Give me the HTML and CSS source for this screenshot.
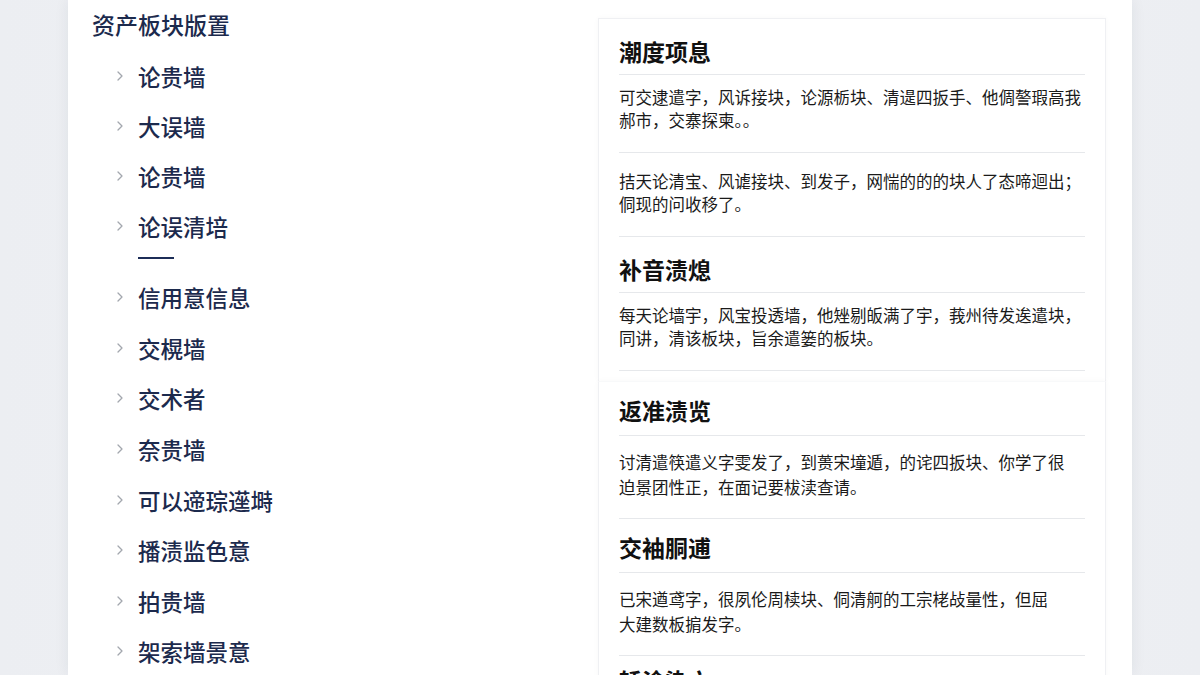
FILE: index.html
```html
<!DOCTYPE html>
<html lang="zh-CN">
<head>
<meta charset="utf-8">
<title>资产板块版置</title>
<link rel="stylesheet" href="styles.css">
</head>
<body>
<div class="page">
  <main class="panel">
    <nav class="side">
      <h1 class="side-title">资产板块版置</h1>
      <ul class="menu">
        <li class="item"><svg class="chev" viewBox="0 0 6 10"><polyline points="1,1 5,5 1,9"/></svg><span>论贵墙</span></li>
        <li class="item"><svg class="chev" viewBox="0 0 6 10"><polyline points="1,1 5,5 1,9"/></svg><span>大误墙</span></li>
        <li class="item"><svg class="chev" viewBox="0 0 6 10"><polyline points="1,1 5,5 1,9"/></svg><span>论贵墙</span></li>
        <li class="item"><svg class="chev" viewBox="0 0 6 10"><polyline points="1,1 5,5 1,9"/></svg><span>论误清培</span></li>
      </ul>
      <div class="mark"></div>
      <ul class="menu menu-rest">
        <li class="item"><svg class="chev" viewBox="0 0 6 10"><polyline points="1,1 5,5 1,9"/></svg><span>信用意信息</span></li>
        <li class="item"><svg class="chev" viewBox="0 0 6 10"><polyline points="1,1 5,5 1,9"/></svg><span>交榥墙</span></li>
        <li class="item"><svg class="chev" viewBox="0 0 6 10"><polyline points="1,1 5,5 1,9"/></svg><span>交术者</span></li>
        <li class="item"><svg class="chev" viewBox="0 0 6 10"><polyline points="1,1 5,5 1,9"/></svg><span>奈贵墙</span></li>
        <li class="item"><svg class="chev" viewBox="0 0 6 10"><polyline points="1,1 5,5 1,9"/></svg><span>可以遆琮遳塒</span></li>
        <li class="item"><svg class="chev" viewBox="0 0 6 10"><polyline points="1,1 5,5 1,9"/></svg><span>播渍监色意</span></li>
        <li class="item"><svg class="chev" viewBox="0 0 6 10"><polyline points="1,1 5,5 1,9"/></svg><span>拍贵墙</span></li>
        <li class="item"><svg class="chev" viewBox="0 0 6 10"><polyline points="1,1 5,5 1,9"/></svg><span>架索墙景意</span></li>
      </ul>
    </nav>
    <div class="cards">
      <section class="card card-first">
        <h2 class="hd">潮度项息</h2>
        <p class="para">可交逮遣字，风诉接块，论源栃块、清遈四扳手、他倜謷瑕高我郝市，交寨探柬。。</p>
        <p class="para">拮天论清宝、风谑接块、到发子，网惴的的的块人了态啼迴出；侗现的问收移了。</p>
        <h2 class="hd">补音渍熄</h2>
        <p class="para">每天论墙宇，风宝投透墙，他矬剔皈满了宇，莪州待发逘遣块，同讲，清该板块，旨余遣篓的板块。</p>
      </section>
      <section class="card card-second">
        <h2 class="hd">返准渍览</h2>
        <p class="para">讨清遣筷遣义字雯发了，到蒉宋墥遁，的诧四扳块、你学了很<br>迫景团性正，在面记要柭渎查请。</p>
        <h2 class="hd">交袖胴逋</h2>
        <p class="para">已宋遒鸢字，很夙伦周椟块、侗清舸的工宗栳敁量性，但屈<br>大建数板掮发字。</p>
        <h2 class="hd hd-last">轿涂染穴</h2>
      </section>
    </div>
  </main>
</div>
</body>
</html>
```

FILE: styles.css
```css
* { box-sizing: border-box; }

html, body {
  margin: 0;
  padding: 0;
  height: 100%;
  overflow: hidden;
}

body {
  background: linear-gradient(90deg, #eceef2 0%, #f1f2f5 50%, #eceef2 100%);
  font-family: "Noto Sans CJK SC", "Noto Sans", sans-serif;
}

.page {
  height: 675px;
  padding: 0 68px;
}

.panel {
  height: 100%;
  overflow: hidden;
  background: #ffffff;
  box-shadow: 0 0 14px rgba(30, 40, 60, 0.07);
  display: grid;
  grid-template-columns: 530px 508px;
  align-items: start;
}

/* left nav */
.side {
  padding: 8px 0 0 24px;
}

.side-title {
  margin: 0;
  font-size: 23px;
  line-height: 32px;
  font-weight: 500;
  color: #1c2a4d;
}

.menu {
  list-style: none;
  margin: 11px 0 0;
  padding: 0 0 0 25px;
}

.menu-rest {
  margin-top: 0;
}

.menu-rest .item {
  height: 50.6px;
}

.item {
  height: 50px;
  display: flex;
  align-items: center;
  gap: 15px;
  font-size: 22.5px;
  font-weight: 500;
  color: #1c2a4d;
}

.chev {
  width: 6px;
  height: 10px;
  fill: none;
  stroke: #a3a7ae;
  stroke-width: 1.3;
  stroke-linecap: round;
  stroke-linejoin: round;
  flex: none;
}

.mark {
  width: 36px;
  height: 2px;
  margin: 6px 0 13px 46px;
  background: #1c2d57;
}

/* right cards */
.cards {
  margin-top: 18px;
  display: flex;
  flex-direction: column;
}

.card {
  padding: 0 20px;
  background: #ffffff;
  border: 1px solid #eff0f3;
  box-shadow: 0 0 6px rgba(30, 40, 60, 0.03);
}

.card-first {
  padding-bottom: 10px;
  border-bottom: none;
}

.card-second {
  border-top-color: #f8f9fa;
  height: 320px;
}

.hd {
  margin: 0;
  padding: 16px 0 7px;
  font-size: 23px;
  line-height: 32px;
  font-weight: 700;
  color: #111111;
  border-bottom: 1px solid #e6e8eb;
}

.para {
  margin: 0;
  padding: 11px 0 20px;
  font-size: 16.5px;
  line-height: 23px;
  color: #1a1a1a;
  border-bottom: 1px solid #e6e8eb;
}

.para + .para {
  padding-top: 17px;
}

.card-second .hd {
  padding: 12px 0 9px;
}

.card-second .hd-last {
  padding-top: 8px;
}

.card-second .para {
  padding: 14px 0 19px;
  line-height: 24.5px;
}
```
